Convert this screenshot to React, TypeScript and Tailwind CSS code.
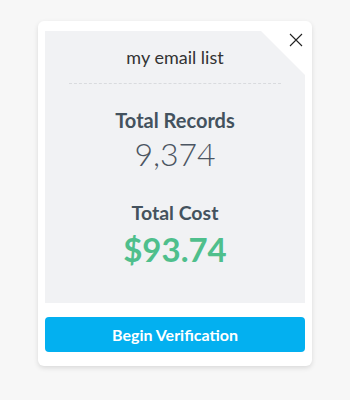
import React from 'react';

export default function App() {
  return (
    <div className="min-h-[400px] w-[350px] bg-[#f7f7f7] pt-[21px] font-['Lato',sans-serif]">
      <div className="relative mx-auto w-[274px] rounded-md bg-white px-[7px] pt-[10px] pb-[14px] shadow-[0_2px_5px_rgba(0,0,0,0.12)]">
        {/* Summary panel */}
        <div className="h-[272px] bg-[#f1f2f4] [clip-path:polygon(0_0,calc(100%_-_44px)_0,100%_44px,100%_100%,0_100%)]">
          <div className="flex flex-col items-center">
            <div className="mt-[14px] text-[18px] leading-6 text-[#333]">my email list</div>
            <div className="mt-[14px] w-[212px] border-t border-dashed border-[#d9dbde]" />
            <div className="mt-[24px] text-[20px] font-bold leading-6 text-[#44525e]">Total Records</div>
            <div className="mt-[2px] text-[32px] font-light leading-10 text-[#4b5561]">9,374</div>
            <div className="mt-[27px] text-[19.5px] font-bold leading-6 text-[#44525e]">Total Cost</div>
            <div className="mt-[4px] text-[33px] font-bold leading-10 text-[#4fbf8c]">$93.74</div>
          </div>
        </div>
        <button className="absolute right-[9px] top-[12px] text-[#222]" aria-label="Close">
          <svg width="14" height="14" viewBox="0 0 14 14" stroke="currentColor" strokeWidth="1.1">
            <path d="M1 1 13 13M13 1 1 13" />
          </svg>
        </button>
        <button className="mt-[14px] h-[35px] w-full rounded-sm bg-[#03b0f0] text-[16px] font-bold text-white">
          Begin Verification
        </button>
      </div>
    </div>
  );
}
